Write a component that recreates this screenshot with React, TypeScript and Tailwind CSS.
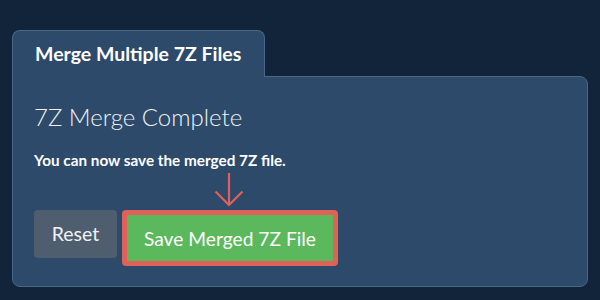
export default function App() {
  return (
    <div className="h-[300px] w-[600px] bg-[#11243a] px-3 pt-[30px] font-['Lato','Noto_Sans',sans-serif] text-white">
      <div className="flex">
        <div className="relative z-10 -mb-px flex h-[47px] w-[253px] items-center rounded-t-lg border border-b-0 border-[#4a6787] bg-[#2d4a6a] pl-[22px] text-[19.5px] font-bold">
          Merge Multiple 7Z Files
        </div>
      </div>
      <div className="h-[211px] w-[576px] rounded-b-lg rounded-tr-lg border border-[#4a6787] bg-[#2d4a6a] px-[21px] pt-[24px]">
        <h2 className="text-[24px] font-light leading-[32px] text-[#eef2f6]">7Z Merge Complete</h2>
        <p className="mt-[17px] text-[15.3px] font-bold leading-5">You can now save the merged 7Z file.</p>
        <div className="mt-[40px] flex items-start gap-[5px]">
          <button className="h-12 w-[83px] rounded bg-[#4e5e6f] text-[19.5px] text-[#eef2f6]">Reset</button>
          <div className="relative">
            <svg width="30" height="35" viewBox="0 0 30 35" className="absolute -top-[38px] left-[92px]" fill="none" stroke="#e0605a" strokeWidth="2.2">
              <path d="M15 1 V33" />
              <path d="M1.5 19.5 L15 33 L28.5 19.5" />
            </svg>
            <button className="h-14 w-[216px] rounded-[4px] border-[5px] border-[#e0605a] bg-[#5cb85c] pt-[2px] text-[19.2px] text-white">
              Save Merged 7Z File
            </button>
          </div>
        </div>
      </div>
    </div>
  );
}
